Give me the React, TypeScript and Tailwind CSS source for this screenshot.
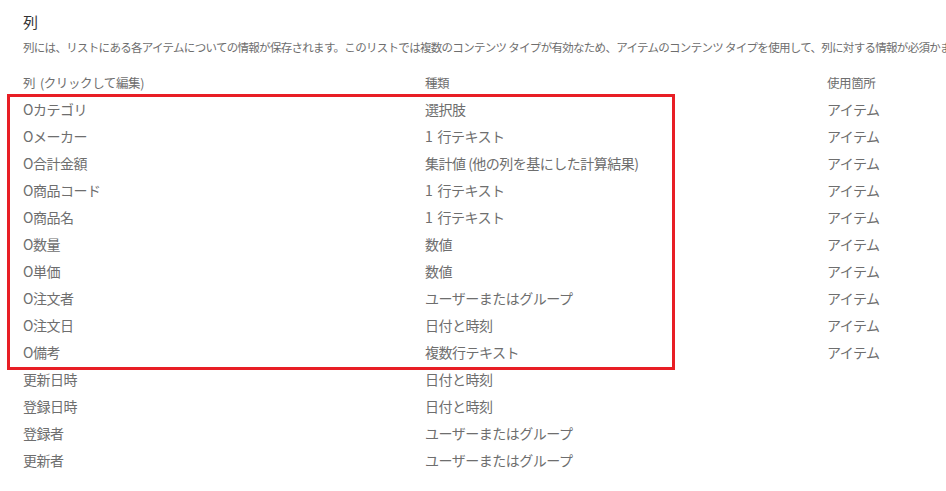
const FONT = {
  fontFamily: '"Meiryo UI", "Noto Sans CJK JP", "Noto Sans", sans-serif',
};

type Column = { name: string; type: string; usedIn?: string };

const MARKED: Column[] = [
  { name: "Oカテゴリ", type: "選択肢", usedIn: "アイテム" },
  { name: "Oメーカー", type: "1 行テキスト", usedIn: "アイテム" },
  { name: "O合計金額", type: "集計値 (他の列を基にした計算結果)", usedIn: "アイテム" },
  { name: "O商品コード", type: "1 行テキスト", usedIn: "アイテム" },
  { name: "O商品名", type: "1 行テキスト", usedIn: "アイテム" },
  { name: "O数量", type: "数値", usedIn: "アイテム" },
  { name: "O単価", type: "数値", usedIn: "アイテム" },
  { name: "O注文者", type: "ユーザーまたはグループ", usedIn: "アイテム" },
  { name: "O注文日", type: "日付と時刻", usedIn: "アイテム" },
  { name: "O備考", type: "複数行テキスト", usedIn: "アイテム" },
];

const SYSTEM: Column[] = [
  { name: "更新日時", type: "日付と時刻" },
  { name: "登録日時", type: "日付と時刻" },
  { name: "登録者", type: "ユーザーまたはグループ" },
  { name: "更新者", type: "ユーザーまたはグループ" },
];

function Row({ col }: { col: Column }) {
  return (
    <div className="flex items-center h-[27px] text-[14px] text-[#6e6e6e] tracking-[-0.5px]">
      <span className="w-[402px] shrink-0">{col.name}</span>
      <span className="w-[402px] shrink-0 whitespace-pre">{col.type.replace("1 ", "1  ")}</span>
      <span>{col.usedIn ?? ""}</span>
    </div>
  );
}

export default function App() {
  return (
    <div className="w-[946px] h-[491px] bg-white overflow-hidden" style={FONT}>
      <div className="pl-[23px] pt-[11px]">
        <h2 className="text-[15px] leading-[22px] text-[#333333]">列</h2>
        <p className="mt-[3px] text-[11.5px] leading-[22px] text-[#6e6e6e] whitespace-nowrap overflow-hidden tracking-[-0.7px]">
          列には、リストにある各アイテムについての情報が保存されます。このリストでは複数のコンテンツ タイプが有効なため、アイテムのコンテンツ タイプを使用して、列に対する情報が必須かまたは省略可能かなどの設定を指定できます。
        </p>
        <div className="mt-[14px] flex items-center h-[22px] text-[12.5px] text-[#6e6e6e] tracking-[-0.4px]">
          <span className="w-[402px] shrink-0 whitespace-pre">列  (クリックして編集)</span>
          <span className="w-[402px] shrink-0">種類</span>
          <span>使用箇所</span>
        </div>
        <div className="relative mt-[2px]">
          {MARKED.map((c) => (
            <Row key={c.name} col={c} />
          ))}
          <div className="absolute left-[-16px] top-[-2px] w-[668px] bottom-[-4px] border-[3px] border-[#e81e25] pointer-events-none" />
        </div>
        {SYSTEM.map((c) => (
          <Row key={c.name} col={c} />
        ))}
      </div>
    </div>
  );
}
